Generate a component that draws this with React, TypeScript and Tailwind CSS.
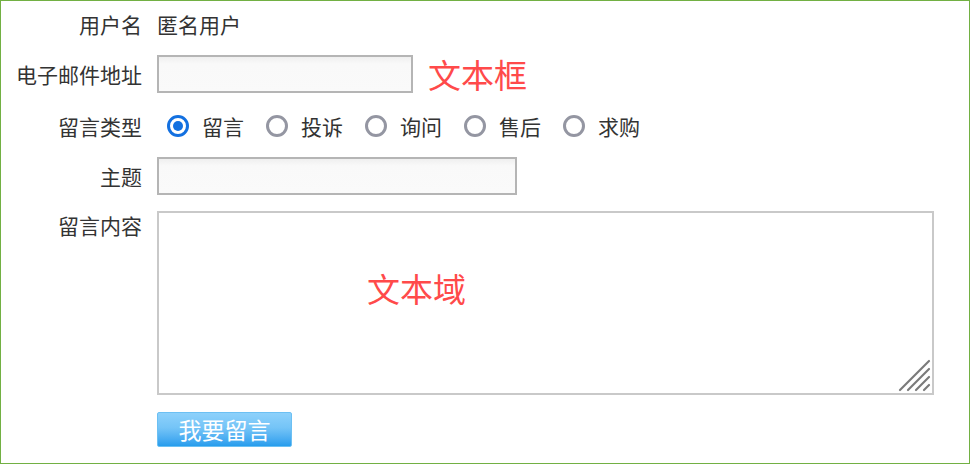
import React from 'react';

const types = ['留言', '投诉', '询问', '售后', '求购'];

function Radio({ checked }: { checked?: boolean }) {
  return checked ? (
    <span className="flex h-[22px] w-[22px] shrink-0 items-center justify-center rounded-full border-[3px] border-[#1370e0] bg-white">
      <span className="h-[10px] w-[10px] rounded-full bg-[#1370e0]" />
    </span>
  ) : (
    <span className="h-[22px] w-[22px] shrink-0 rounded-full border-[3px] border-[#9496a2] bg-white" />
  );
}

function Label({ children }: { children: React.ReactNode }) {
  return <div className="w-[141px] shrink-0 text-right">{children}</div>;
}

export default function App() {
  return (
    <div
      className="h-[464px] w-[970px] border border-[#72b043] bg-white text-[21px] leading-[28px] text-[#333]"
      style={{ fontFamily: '"Noto Sans CJK SC", "Noto Sans", sans-serif' }}
    >
      <div className="flex flex-col">
        <div className="flex h-[49px] items-center gap-[15px] pb-[3px]">
          <Label>用户名</Label>
          <span>匿名用户</span>
        </div>

        <div className="flex h-[48px] items-center gap-[15px]">
          <Label>电子邮件地址</Label>
          <input
            type="text"
            className="h-[38px] w-[256px] border-2 border-[#b5b5b5] bg-gradient-to-b from-[#efefef] via-[#f9f9f9] via-[20%] to-[#fafafa] px-2 outline-none"
          />
          <span className="text-[33px] leading-none text-[#ff4a4a]">文本框</span>
        </div>

        <div className="flex h-[56px] items-center gap-[15px]">
          <Label>留言类型</Label>
          <div className="flex items-center pl-[10px]">
            {types.map((t, i) => (
              <div key={t} className="flex w-[99px] items-center gap-[13px]">
                <Radio checked={i === 0} />
                <span>{t}</span>
              </div>
            ))}
          </div>
        </div>

        <div className="flex h-[43px] items-center gap-[15px]">
          <Label>主题</Label>
          <input
            type="text"
            className="h-[38px] w-[360px] border-2 border-[#b5b5b5] bg-gradient-to-b from-[#efefef] via-[#f9f9f9] via-[20%] to-[#fafafa] px-2 outline-none"
          />
        </div>

        <div className="mt-[14px] flex items-start gap-[15px]">
          <Label>留言内容</Label>
          <div className="relative h-[184px] w-[777px]">
            <textarea className="h-full w-full resize-none border-2 border-[#c9c9c9] bg-white outline-none" />
            <span className="pointer-events-none absolute left-[210px] top-[61px] text-[33px] leading-none text-[#ff4a4a]">
              文本域
            </span>
            <svg
              className="pointer-events-none absolute bottom-[3px] right-[3px]"
              width="34"
              height="34"
              viewBox="0 0 34 34"
            >
              <g stroke="#7a7a7a" strokeWidth="2.2" strokeLinecap="round">
                <line x1="3" y1="32" x2="32" y2="3" />
                <line x1="11" y1="32" x2="32" y2="11" />
                <line x1="19" y1="32" x2="32" y2="19" />
                <line x1="27" y1="32" x2="32" y2="27" />
              </g>
            </svg>
          </div>
        </div>

        <div className="mt-[17px] flex gap-[15px]">
          <div className="w-[141px] shrink-0" />
          <button className="h-[35px] w-[135px] rounded-[2px] border border-[#6cc0f3] bg-gradient-to-b from-[#8dd1fb] via-[#74c4f7] via-[45%] to-[#259ded] text-[23px] leading-none text-white">
            我要留言
          </button>
        </div>
      </div>
    </div>
  );
}
